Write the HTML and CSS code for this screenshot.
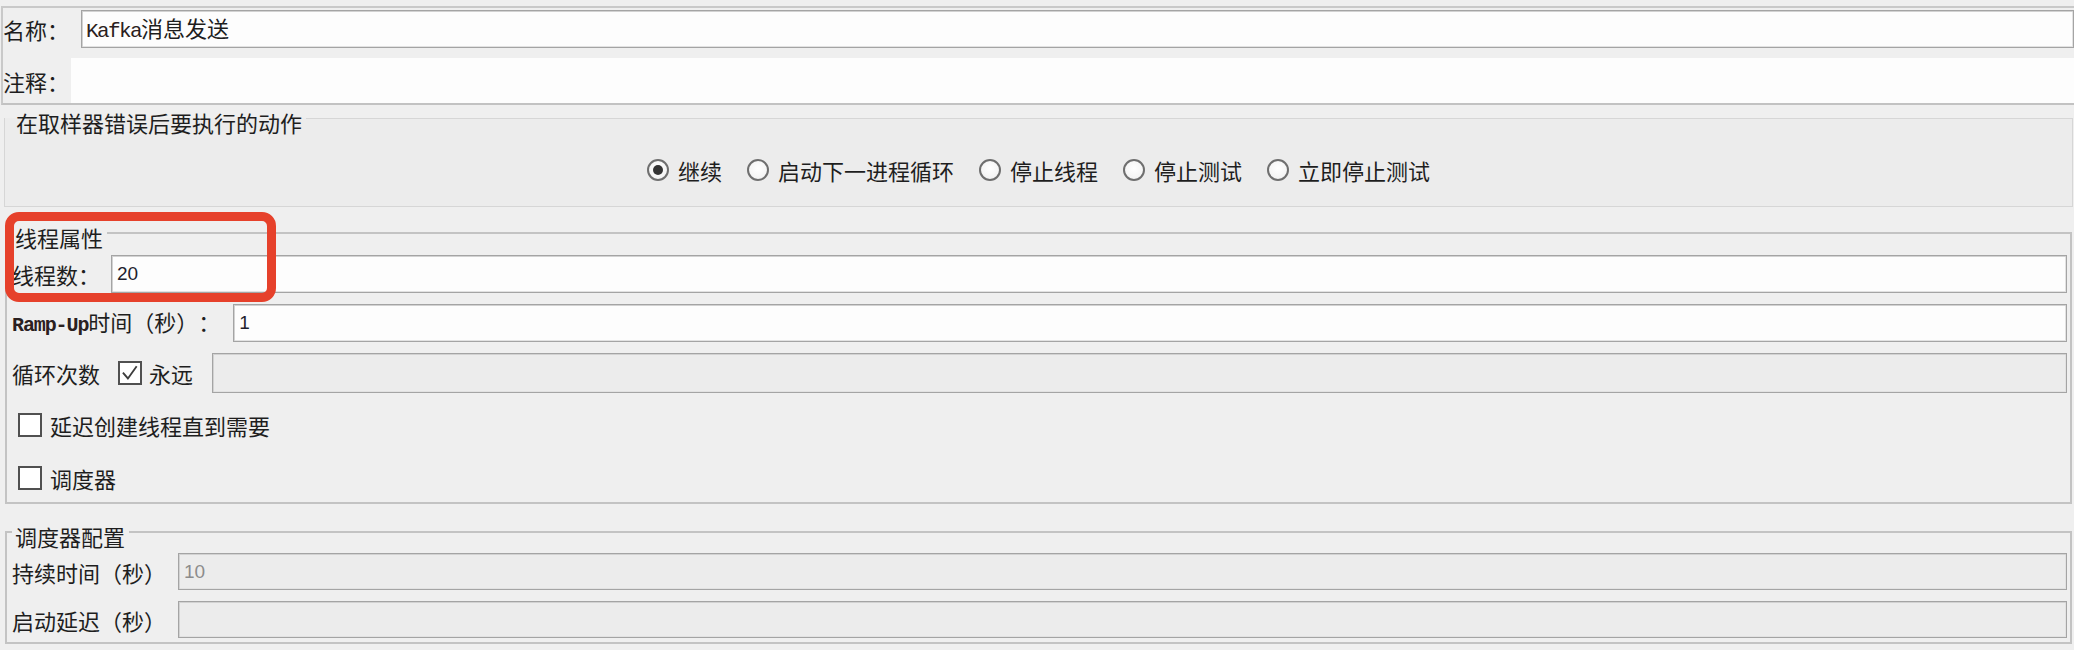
FILE: index.html
```html
<!DOCTYPE html>
<html lang="zh">
<head>
<meta charset="utf-8">
<title>Kafka消息发送</title>
<link rel="stylesheet" href="styles.css">
</head>
<body>
<div class="page">
  <section class="namepanel">
    <div class="name-row">
      <span class="name-label">名称：</span>
      <div class="field name-field"><span class="value"><span class="mono">Kafka</span>消息发送</span></div>
    </div>
    <div class="comment-row">
      <span class="comment-label">注释：</span>
      <div class="comment-area"></div>
    </div>
  </section>

  <fieldset class="group group-error">
    <legend>在取样器错误后要执行的动作</legend>
    <div class="radio-row">
      <span class="radio-item"><span class="radio checked"></span>继续</span>
      <span class="radio-item"><span class="radio"></span>启动下一进程循环</span>
      <span class="radio-item"><span class="radio"></span>停止线程</span>
      <span class="radio-item"><span class="radio"></span>停止测试</span>
      <span class="radio-item"><span class="radio"></span>立即停止测试</span>
    </div>
  </fieldset>

  <fieldset class="group group-thread">
    <legend>线程属性</legend>
    <div class="form-row row-threads">
      <span class="label label-threads">线程数：</span>
      <div class="field"><span class="num">20</span></div>
    </div>
    <div class="form-row row-ramp">
      <span class="label label-ramp"><span class="mono bold">Ramp-Up</span>时间（秒）：</span>
      <div class="field"><span class="num">1</span></div>
    </div>
    <div class="form-row row-loop">
      <span class="label">循环次数</span>
      <span class="checkbox checked loop-check"><svg viewBox="0 0 24 24" width="20" height="20"><path d="M3.5 11.5 L9.5 18.5 L20 4" fill="none" stroke="#3c3c3c" stroke-width="2.2"/></svg></span>
      <span class="loop-forever">永远</span>
      <div class="field disabled"></div>
    </div>
    <div class="check-row row-delay">
      <span class="checkbox"></span>
      <span>延迟创建线程直到需要</span>
    </div>
    <div class="check-row row-sched">
      <span class="checkbox"></span>
      <span>调度器</span>
    </div>
  </fieldset>

  <fieldset class="group group-sched">
    <legend>调度器配置</legend>
    <div class="form-row sched-row">
      <span class="label sched-label">持续时间（秒）</span>
      <div class="field disabled"><span class="num muted">10</span></div>
    </div>
    <div class="form-row sched-row second">
      <span class="label sched-label">启动延迟（秒）</span>
      <div class="field disabled"></div>
    </div>
  </fieldset>

  <div class="annotation"></div>
</div>
</body>
</html>
```

FILE: styles.css
```css
* {
  box-sizing: border-box;
}

html,
body {
  margin: 0;
  padding: 0;
}

body {
  width: 2074px;
  height: 650px;
  overflow: hidden;
  background: #efefef;
  color: #1e1e1e;
  font-family: "Noto Sans CJK SC", "Noto Sans", sans-serif;
  font-size: 22px;
  line-height: 22px;
  text-spacing-trim: space-all;
}

.page {
  position: relative;
  padding-top: 6px;
}

/* ---------- name / comment panel ---------- */
.namepanel {
  margin-left: 1px;
  padding-top: 2px;
  border-top: 2px solid #c9c9c9;
  border-left: 2px solid #c9c9c9;
  border-bottom: 2px solid #c2c2c2;
}

.name-row,
.comment-row {
  display: flex;
  align-items: center;
}

.name-row {
  height: 38px;
}

.name-label {
  width: 78px;
  flex: none;
}

.comment-row {
  margin-top: 10px;
  height: 45px;
}

.comment-label {
  width: 68px;
  flex: none;
}

.comment-area {
  flex: 1;
  align-self: stretch;
  background: #fdfdfd;
}

/* ---------- generic input field ---------- */
.field {
  flex: 1;
  display: flex;
  align-items: center;
  align-self: stretch;
  padding-left: 5px;
  background: #fdfdfd;
  border: 1px solid #a4a4a4;
  box-shadow: inset 1px 1px 0 #d2d2d2, inset -1px -1px 0 #e2e2e2;
}

.field.disabled {
  background: #ececec;
}

.name-field {
  padding-left: 4px;
}

.value {
  white-space: nowrap;
}

.mono {
  font-family: "Liberation Mono", "DejaVu Sans Mono", monospace;
  font-size: 21px;
  letter-spacing: -1.6px;
  color: #2a2020;
}

.mono.bold {
  font-weight: bold;
  font-size: 20px;
  letter-spacing: -1.1px;
}

.num {
  font-family: "Liberation Sans", "Noto Sans", sans-serif;
  font-size: 19px;
  color: #1f1f2e;
}

.num.muted {
  color: #8c8c8c;
}

/* ---------- titled groups ---------- */
.group {
  min-width: 0;
  margin: 0;
  padding: 0;
}

.group legend {
  padding: 8px 4px 0 3px;
  margin-left: 0;
  line-height: 22px;
}

.group-error {
  margin: -2px 1px 0 4px;
  padding: 26px 0 25px 0;
  border: 1px solid #d6d6d6;
  background: #ececec;
}

.group-error legend {
  padding-left: 11px;
}

.radio-row {
  display: flex;
  justify-content: center;
  gap: 25px;
  height: 22px;
  align-items: center;
}

.radio-item {
  display: flex;
  align-items: center;
  gap: 9px;
}

.radio {
  width: 22px;
  height: 22px;
  border-radius: 50%;
  border: 2px solid #6f6f6f;
  background: radial-gradient(circle at 50% 40%, #ffffff 0%, #f4f4f4 70%, #dcdcdc 100%);
  display: flex;
  align-items: center;
  justify-content: center;
}

.radio.checked::after {
  content: "";
  width: 10px;
  height: 10px;
  border-radius: 50%;
  background: #333333;
}

.group-thread {
  margin: 11px 2px 0 5px;
  padding: 7px 3px 6px 5px;
  border: 2px solid #c3c3c3;
}

.group-sched {
  margin: 13px 2px 0 5px;
  padding: 6px 3px 4px 5px;
  border: 2px solid #c3c3c3;
}

.form-row {
  display: flex;
  align-items: center;
  height: 38px;
}

.label {
  flex: none;
  white-space: nowrap;
}

.label-threads {
  margin-right: 11px;
}

.row-ramp {
  margin-top: 11px;
}

.label-ramp {
  margin-right: 13px;
}

.row-loop {
  margin-top: 11px;
  height: 40px;
}

.loop-check {
  margin-left: 18px;
}

.loop-forever {
  margin-left: 7px;
  margin-right: 19px;
}

.check-row {
  display: flex;
  align-items: center;
  gap: 8px;
  height: 36px;
  padding-left: 6px;
}

.row-delay {
  margin-top: 14px;
}

.row-sched {
  margin-top: 17px;
}

.checkbox {
  flex: none;
  width: 24px;
  height: 24px;
  border: 2px solid #505050;
  background: #ffffff;
  display: flex;
  align-items: center;
  justify-content: center;
}

.sched-row {
  height: 37px;
}

.sched-row.second {
  margin-top: 11px;
}

.sched-label {
  margin-right: 12px;
}

/* ---------- red annotation box drawn over the form ---------- */
.annotation {
  position: absolute;
  left: 5px;
  top: 212px;
  width: 271px;
  height: 90px;
  border: 9px solid #e6412b;
  border-radius: 14px;
  pointer-events: none;
}
```
